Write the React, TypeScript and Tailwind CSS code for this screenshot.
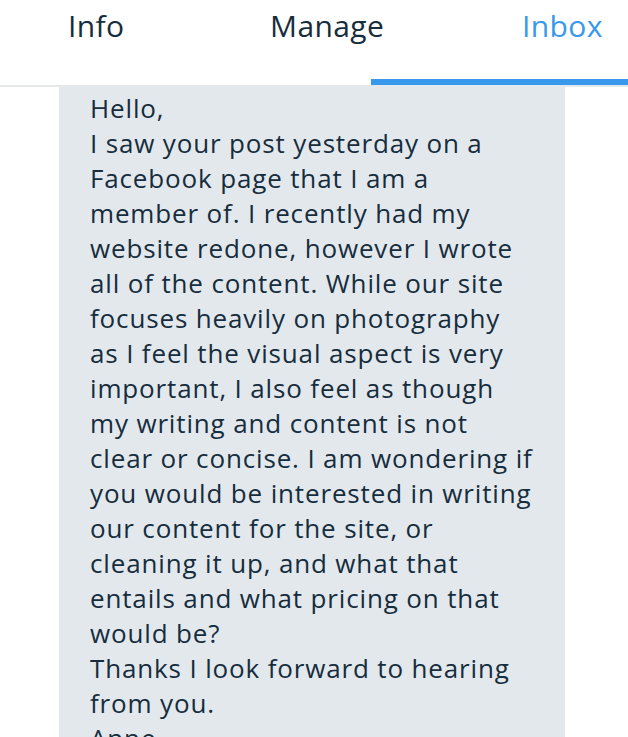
import React from "react";

const lines = [
  "Hello,",
  "I saw your post yesterday on a",
  "Facebook page that I am a",
  "member of. I recently had my",
  "website redone, however I wrote",
  "all of the content. While our site",
  "focuses heavily on photography",
  "as I feel the visual aspect is very",
  "important, I also feel as though",
  "my writing and content is not",
  "clear or concise. I am wondering if",
  "you would be interested in writing",
  "our content for the site, or",
  "cleaning it up, and what that",
  "entails and what pricing on that",
  "would be?",
  "Thanks I look forward to hearing",
  "from you.",
  "Anne",
];

export default function App() {
  return (
    <div
      className="w-[628px] h-[737px] overflow-hidden bg-white text-[#162d3d]"
      style={{ fontFamily: '"Open Sans", "Noto Sans", sans-serif' }}
    >
      <div className="relative h-[87px] border-b-2 border-[#e3e8ed]">
        <div className="flex h-[85px] items-start pt-[5px] text-[30px] leading-[42px] tracking-[0.4px]">
          <div className="w-[270px] pl-[68px]">Info</div>
          <div className="w-[252px]">Manage</div>
          <div className="text-[#3899ec]">Inbox</div>
        </div>
        <div className="absolute left-[371px] right-0 bottom-[0px] h-[6px] bg-[#3899ec]" />
      </div>
      <div className="ml-[59px] w-[506px] bg-[#e3e8ed] pl-[31px] pt-[4px] text-[26px] leading-[35px] tracking-[0.85px] h-[700px]">
        {lines.map((l, i) => (
          <div key={i} className="whitespace-nowrap">
            {l}
          </div>
        ))}
      </div>
    </div>
  );
}
